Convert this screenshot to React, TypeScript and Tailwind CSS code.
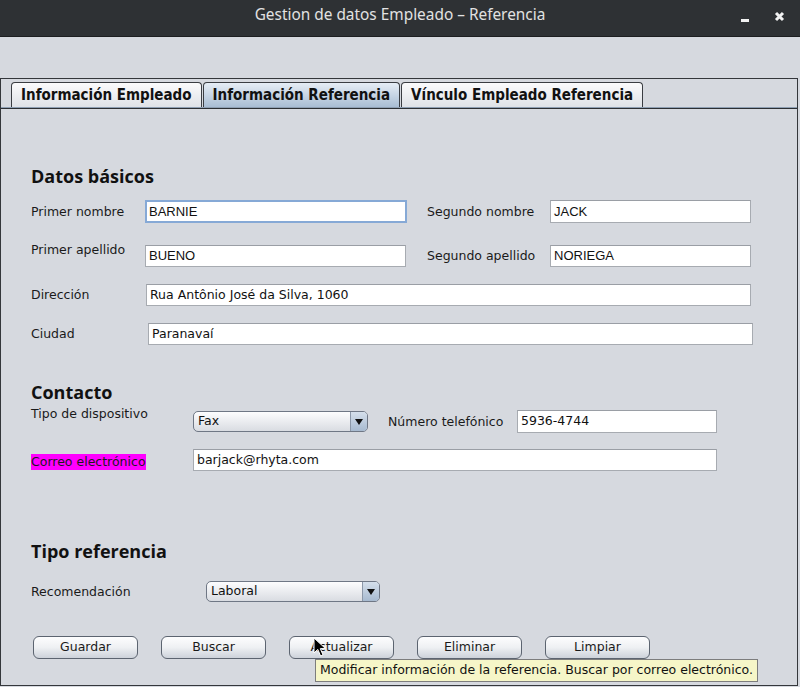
import React from 'react'

const fieldCls =
  "h-full bg-white border border-[#a7abb1] border-t-[#9a9ea5] flex items-center px-[3px] text-[12.5px] text-[#111] font-['DejaVu_Sans',sans-serif] whitespace-nowrap overflow-hidden"

const labelCls = "text-[12.5px] leading-[16px] text-[#1a1a1a] font-['DejaVu_Sans',sans-serif] whitespace-nowrap"

const headCls = "h-[22px] flex items-center text-[18px] font-bold text-[#111] font-['Open_Sans',sans-serif]"

const Combo: React.FC<{ value: string; w: string }> = ({ value, w }) => (
  <div className={`${w} h-full flex rounded-[5px] border border-[#6f7785] overflow-hidden bg-gradient-to-b from-[#fdfdfe] to-[#d9dce2]`}>
    <div className="flex-1 flex items-center pl-[4px] text-[12.5px] text-[#111] font-['DejaVu_Sans',sans-serif]">{value}</div>
    <div className="w-[17px] border-l border-[#8b97a8] flex items-center justify-center bg-gradient-to-b from-[#d5dfeb] to-[#a7bad0]">
      <svg width="8" height="6" viewBox="0 0 8 6"><path d="M0 0H8L4 6Z" fill="#111" /></svg>
    </div>
  </div>
)

const Btn: React.FC<{ label: string }> = ({ label }) => (
  <div className="w-[105px] h-full rounded-[6px] border border-[#5c6470] bg-gradient-to-b from-[#fdfdfe] via-[#eef0f3] to-[#cdd2da] flex items-center justify-center text-[12.5px] text-[#1a1a1a] font-['DejaVu_Sans',sans-serif]">
    {label}
  </div>
)

const tabBase =
  "h-[25px] px-[9px] flex items-center rounded-t-[4px] border border-b-0 border-[#3a3d42] text-[15px] font-bold text-[#111] font-['DejaVu_Sans_Condensed','DejaVu_Sans',sans-serif] font-stretch-condensed whitespace-nowrap"

export default function App() {
  return (
    <div className="w-[800px] h-[687px] bg-[#d6d9df] overflow-hidden relative flex flex-col">
      {/* title bar */}
      <div className="h-[37px] shrink-0 bg-[#2e3134] border-b border-[#1c1e20] flex items-center">
        <div className="w-[90px]" />
        <div className="flex-1 text-center text-[15.4px] text-[#e2e2e2] font-['Noto_Sans',sans-serif] pb-[6px]">
          Gestion de datos Empleado – Referencia
        </div>
        <div className="w-[90px] flex items-center justify-end gap-[24px] pr-[15px] pb-[4px]">
          <svg width="10" height="4" viewBox="0 0 10 4" className="mt-[10px]"><rect x="1" y="0" width="8" height="3" fill="#f2f2f2" /></svg>
          <svg width="11" height="11" viewBox="0 0 11 11"><path d="M2 2L9 9M9 2L2 9" stroke="#f2f2f2" strokeWidth="3" /></svg>
        </div>
      </div>

      <div className="h-[41px] shrink-0" />

      {/* tabbed pane */}
      <div className="w-[798px] h-[608px] border border-[#34373b] flex flex-col">
        <div className="pt-[3px] pl-[10px] flex items-end border-b border-[#8e9fb3]">
          <div className={`${tabBase} bg-gradient-to-b from-[#fbfbfc] to-[#dfe2e7]`}>Información Empleado</div>
          <div className={`${tabBase} ml-[1px] bg-gradient-to-b from-[#e6edf5] to-[#a9bdd3]`}>Información Referencia</div>
          <div className={`${tabBase} ml-[1px] bg-gradient-to-b from-[#fbfbfc] to-[#dfe2e7]`}>Vínculo Empleado Referencia</div>
        </div>
        <div className="h-[1px] bg-[#2c2f33]" />

        <div className="flex flex-col pl-[30px]">
          <div className={`${headCls} mt-[56px]`}>Datos básicos</div>

          <div className="h-[23px] mt-[13px] flex items-center">
            <div className={`${labelCls} w-[114px]`}>Primer nombre</div>
            <div className="w-[262px] h-full bg-white border-2 border-[#86a9d6] flex items-center px-[2px] text-[13px] text-[#111] font-['Liberation_Sans',sans-serif]">BARNIE</div>
            <div className={`${labelCls} w-[123px] ml-[20px]`}>Segundo nombre</div>
            <div className={`${fieldCls} w-[201px] font-['Liberation_Sans',sans-serif] text-[13px]`}>JACK</div>
          </div>

          <div className="h-[22px] mt-[22px] flex items-start">
            <div className={`${labelCls} w-[114px] -mt-[3px]`}>Primer apellido</div>
            <div className={`${fieldCls} w-[261px] font-['Liberation_Sans',sans-serif] text-[13px]`}>BUENO</div>
            <div className={`${labelCls} w-[123px] ml-[21px] self-center`}>Segundo apellido</div>
            <div className={`${fieldCls} w-[201px] font-['Liberation_Sans',sans-serif] text-[13px]`}>NORIEGA</div>
          </div>

          <div className="h-[22px] mt-[17px] flex items-center">
            <div className={`${labelCls} w-[115px]`}>Dirección</div>
            <div className={`${fieldCls} w-[605px]`}>Rua Antônio José da Silva, 1060</div>
          </div>

          <div className="h-[22px] mt-[17px] flex items-center">
            <div className={`${labelCls} w-[117px]`}>Ciudad</div>
            <div className={`${fieldCls} w-[605px]`}>Paranavaí</div>
          </div>

          <div className={`${headCls} mt-[36px]`}>Contacto</div>

          <div className="h-[23px] mt-[7px] flex items-start">
            <div className={`${labelCls} w-[162px] -mt-[4px]`}>Tipo de dispositivo</div>
            <div className="h-[21px] mt-[1px]"><Combo value="Fax" w="w-[175px]" /></div>
            <div className={`${labelCls} w-[129px] ml-[20px] self-center`}>Número telefónico</div>
            <div className={`${fieldCls} w-[200px]`}>5936-4744</div>
          </div>

          <div className="h-[22px] mt-[16px] flex items-center">
            <div className="w-[162px]">
              <span className={`${labelCls} bg-[#ff00ff] inline-block`}>Correo electrónico</span>
            </div>
            <div className={`${fieldCls} w-[524px]`}>barjack@rhyta.com</div>
          </div>

          <div className={`${headCls} mt-[69px]`}>Tipo referencia</div>

          <div className="h-[21px] mt-[19px] flex items-center">
            <div className={`${labelCls} w-[175px]`}>Recomendación</div>
            <Combo value="Laboral" w="w-[174px]" />
          </div>

          <div className="h-[23px] mt-[34px] ml-[2px] flex gap-[23px]">
            <Btn label="Guardar" />
            <Btn label="Buscar" />
            <Btn label="Actualizar" />
            <Btn label="Eliminar" />
            <Btn label="Limpiar" />
          </div>
        </div>
      </div>

      {/* tooltip */}
      <div className="absolute left-[315px] top-[659px] w-[443px] h-[23px] bg-[#f6f6c8] border border-[#7d7d7d] flex items-center px-[4px] text-[12.5px] text-[#111] font-['DejaVu_Sans',sans-serif] whitespace-nowrap">
        Modificar información de la referencia. Buscar por correo electrónico.
      </div>

      {/* mouse cursor */}
      <svg className="absolute left-[313px] top-[637px]" width="14" height="21" viewBox="0 0 14 21">
        <path d="M1 1V16L4.8 12.4L7.6 19L10 18L7.3 11.6H12.5Z" fill="#000" stroke="#fff" strokeWidth="1" strokeLinejoin="round" />
      </svg>
    </div>
  )
}
